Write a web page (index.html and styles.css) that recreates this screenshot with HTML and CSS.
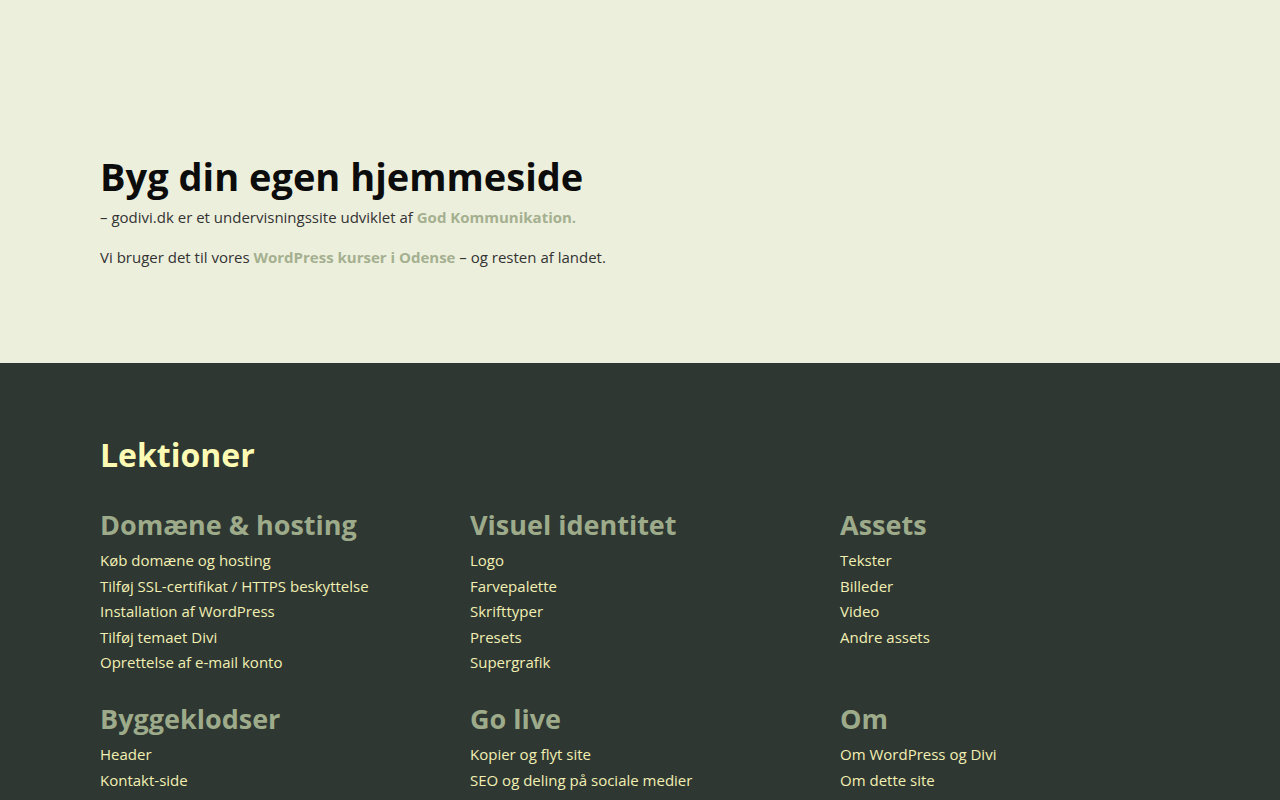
FILE: index.html
```html
<!DOCTYPE html>
<html lang="da">
<head>
<meta charset="UTF-8" />
<title>Byg din egen hjemmeside – godivi.dk</title>
<meta name="viewport" content="width=device-width, initial-scale=1.0" />
<link rel="stylesheet" href="styles.css">
</head>
<body>

<section class="intro">
  <div class="row">
    <h1>Byg din egen hjemmeside</h1>
    <p>– godivi.dk er et undervisningssite udviklet af <a href="#">God Kommunikation.</a></p>
    <p>Vi bruger det til vores <a href="#">WordPress kurser i Odense</a> – og resten af landet.</p>
  </div>
</section>

<section class="lessons">
  <div class="row">
    <h2>Lektioner</h2>

    <div class="lesson-grid">
      <div class="lesson-col">
        <h3>Domæne &amp; hosting</h3>
        <ul>
          <li><a href="#">Køb domæne og hosting</a></li>
          <li><a href="#">Tilføj SSL-certifikat / HTTPS beskyttelse</a></li>
          <li><a href="#">Installation af WordPress</a></li>
          <li><a href="#">Tilføj temaet Divi</a></li>
          <li><a href="#">Oprettelse af e-mail konto</a></li>
        </ul>
      </div>
      <div class="lesson-col">
        <h3>Visuel identitet</h3>
        <ul>
          <li><a href="#">Logo</a></li>
          <li><a href="#">Farvepalette</a></li>
          <li><a href="#">Skrifttyper</a></li>
          <li><a href="#">Presets</a></li>
          <li><a href="#">Supergrafik</a></li>
        </ul>
      </div>
      <div class="lesson-col">
        <h3>Assets</h3>
        <ul>
          <li><a href="#">Tekster</a></li>
          <li><a href="#">Billeder</a></li>
          <li><a href="#">Video</a></li>
          <li><a href="#">Andre assets</a></li>
        </ul>
      </div>

      <div class="lesson-col">
        <h3>Byggeklodser</h3>
        <ul>
          <li><a href="#">Header</a></li>
          <li><a href="#">Kontakt-side</a></li>
        </ul>
      </div>
      <div class="lesson-col">
        <h3>Go live</h3>
        <ul>
          <li><a href="#">Kopier og flyt site</a></li>
          <li><a href="#">SEO og deling på sociale medier</a></li>
        </ul>
      </div>
      <div class="lesson-col">
        <h3>Om</h3>
        <ul>
          <li><a href="#">Om WordPress og Divi</a></li>
          <li><a href="#">Om dette site</a></li>
        </ul>
      </div>
    </div>
  </div>
</section>

</body>
</html>
```

FILE: styles.css
```css
  body {
    margin: 0;
    font-family: "Open Sans", "DejaVu Sans", sans-serif;
    font-size: 15px;
    line-height: 1.7;
    color: #333;
    background: #2e3732;
  }
  a {
    text-decoration: none;
  }
  .row {
    width: 1080px;
    margin: 0 auto;
  }

  /* top intro block */
  .intro {
    background: #edefdd;
    padding: 154px 0 77px;
  }
  .intro h1 {
    margin: 0 0 5px;
    font-size: 38px;
    line-height: 1.2;
    font-weight: 700;
    color: #0c0c0c;
  }
  .intro p {
    margin: 0;
    padding-bottom: 15px;
  }
  .intro a {
    color: #a4b08f;
    font-weight: 700;
  }

  /* lessons list */
  .lessons {
    background: #2e3732;
    padding: 73px 0 40px;
  }
  .lessons h2 {
    margin: 0 0 35px;
    font-size: 32px;
    line-height: 1.2;
    font-weight: 700;
    color: #fdfbb3;
  }
  .lesson-grid {
    display: grid;
    grid-template-columns: repeat(3, 1fr);
    column-gap: 30px;
    row-gap: 27px;
  }
  .lesson-col h3 {
    margin: 0 0 7px;
    font-size: 27px;
    line-height: 1.2;
    font-weight: 700;
    color: #9dab8a;
  }
  .lesson-col ul {
    list-style: none;
    margin: 0;
    padding: 0;
  }
  .lesson-col a {
    color: #f2efb3;
  }
```
